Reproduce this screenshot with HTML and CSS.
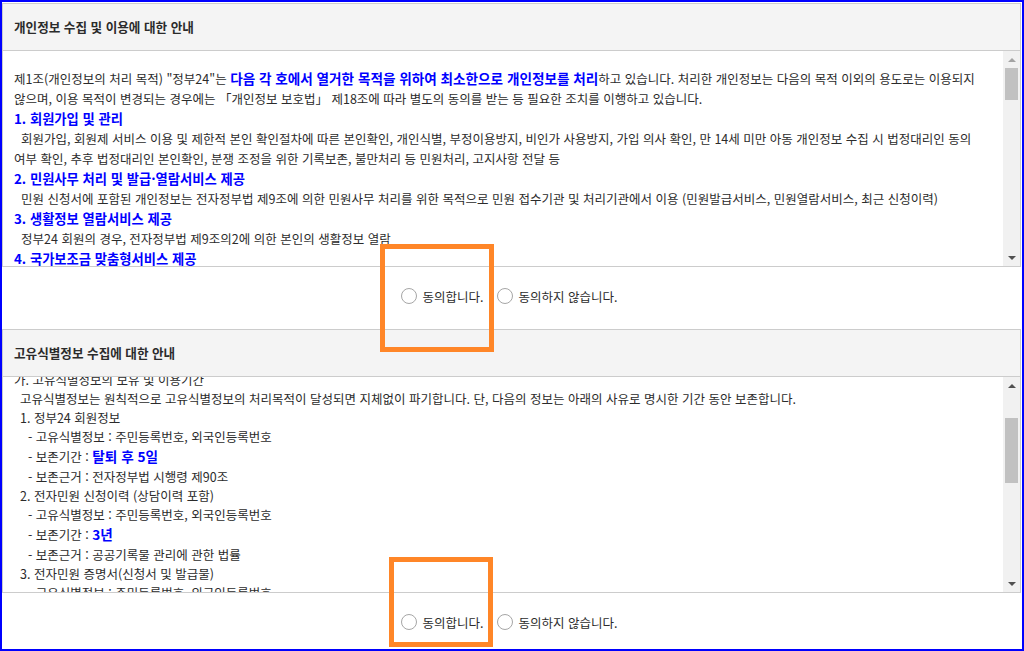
FILE: index.html
```html
<!DOCTYPE html>
<html lang="ko">
<head>
    <meta charset="UTF-8">
    <meta name="viewport" content="width=device-width, initial-scale=1.0">
    <title>약관 동의</title>
    <link rel="stylesheet" href="styles.css">
</head>
<body>
    <div class="frame">
        <section class="terms">
            <h2 class="terms-title">개인정보 수집 및 이용에 대한 안내</h2>
            <div class="terms-box">
                <div class="terms-text">
                    <p>제1조(개인정보의 처리 목적) "정부24"는 <strong>다음 각 호에서 열거한 목적을 위하여 최소한으로 개인정보를 처리</strong>하고 있습니다. 처리한 개인정보는 다음의 목적 이외의 용도로는 이용되지 않으며, 이용 목적이 변경되는 경우에는 「개인정보 보호법」 제18조에 따라 별도의 동의를 받는 등 필요한 조치를 이행하고 있습니다.</p>
                    <h3>1. 회원가입 및 관리</h3>
                    <p class="indent">회원가입, 회원제 서비스 이용 및 제한적 본인 확인절차에 따른 본인확인, 개인식별, 부정이용방지, 비인가 사용방지, 가입 의사 확인, 만 14세 미만 아동 개인정보 수집 시 법정대리인 동의 여부 확인, 추후 법정대리인 본인확인, 분쟁 조정을 위한 기록보존, 불만처리 등 민원처리, 고지사항 전달 등</p>
                    <h3>2. 민원사무 처리 및 발급·열람서비스 제공</h3>
                    <p class="indent">민원 신청서에 포함된 개인정보는 전자정부법 제9조에 의한 민원사무 처리를 위한 목적으로 민원 접수기관 및 처리기관에서 이용 (민원발급서비스, 민원열람서비스, 최근 신청이력)</p>
                    <h3>3. 생활정보 열람서비스 제공</h3>
                    <p class="indent">정부24 회원의 경우, 전자정부법 제9조의2에 의한 본인의 생활정보 열람</p>
                    <h3>4. 국가보조금 맞춤형서비스 제공</h3>
                    <p class="indent">보조금 수급 대상 여부 확인 및 맞춤형 서비스 안내</p>
                </div>
                <div class="scrollbar">
                    <span class="sb-btn"><i class="arrow-up is-off"></i></span>
                    <span class="sb-track"><span class="thumb thumb-top"></span></span>
                    <span class="sb-btn"><i class="arrow-down"></i></span>
                </div>
            </div>
            <div class="agree">
                <label><input type="radio" name="agree1"> 동의합니다.</label>
                <label><input type="radio" name="agree1"> 동의하지 않습니다.</label>
            </div>
        </section>

        <section class="terms">
            <h2 class="terms-title">고유식별정보 수집에 대한 안내</h2>
            <div class="terms-box">
                <div class="terms-text terms-text--scrolled">
                    <p>가. 고유식별정보의 보유 및 이용기간</p>
                    <p class="ind1">고유식별정보는 원칙적으로 고유식별정보의 처리목적이 달성되면 지체없이 파기합니다. 단, 다음의 정보는 아래의 사유로 명시한 기간 동안 보존합니다.</p>
                    <p class="ind1">1. 정부24 회원정보</p>
                    <p class="ind2">- 고유식별정보 : 주민등록번호, 외국인등록번호</p>
                    <p class="ind2 tall">- 보존기간 : <strong>탈퇴 후 5일</strong></p>
                    <p class="ind2">- 보존근거 : 전자정부법 시행령 제90조</p>
                    <p class="ind1">2. 전자민원 신청이력 (상담이력 포함)</p>
                    <p class="ind2">- 고유식별정보 : 주민등록번호, 외국인등록번호</p>
                    <p class="ind2 tall">- 보존기간 : <strong>3년</strong></p>
                    <p class="ind2">- 보존근거 : 공공기록물 관리에 관한 법률</p>
                    <p class="ind1">3. 전자민원 증명서(신청서 및 발급물)</p>
                    <p class="ind2">- 고유식별정보 : 주민등록번호, 외국인등록번호</p>
                    <p class="ind2 tall">- 보존기간 : <strong>5년</strong></p>
                </div>
                <div class="scrollbar">
                    <span class="sb-btn"><i class="arrow-up"></i></span>
                    <span class="sb-track"><span class="thumb thumb-mid"></span></span>
                    <span class="sb-btn"><i class="arrow-down"></i></span>
                </div>
            </div>
            <div class="agree">
                <label><input type="radio" name="agree2"> 동의합니다.</label>
                <label><input type="radio" name="agree2"> 동의하지 않습니다.</label>
            </div>
        </section>

        <!-- annotation boxes -->
        <div class="mark mark-1"></div>
        <div class="mark mark-2"></div>
    </div>
</body>
</html>
```

FILE: styles.css
```css
* {
    margin: 0;
    padding: 0;
    box-sizing: border-box;
}

body {
    background: #fff;
    font-family: "Noto Sans CJK KR", "Noto Sans", sans-serif;
    font-size: 12.5px;
    color: #2b2b2b;
}

.frame {
    position: relative;
    width: 1024px;
    height: 651px;
    border: 2px solid #0000ff;
    padding: 1px 1px 0 0;
    overflow: hidden;
}

.terms-title {
    height: 48px;
    background: #f4f4f4;
    border: 1px solid #ccc;
    padding-left: 11px;
    font-size: 12.6px;
    font-weight: bold;
    line-height: 46px;
    color: #2b2b2b;
}

.terms-box {
    display: flex;
    height: 216px;
    border: 1px solid #ccc;
    border-top: 0;
}

.terms-text {
    flex: 1;
    overflow: hidden;
    padding: 17px 14px 0 11px;
    line-height: 20px;
    word-break: keep-all;
}

.terms-text strong {
    font-size: 13.6px;
    color: #0000ff;
}

.terms-text h3 {
    font-size: 13.3px;
    font-weight: bold;
    color: #0000ff;
    line-height: 20px;
}

.indent {
    text-indent: 7px;
}

.terms-text--scrolled {
    padding-top: 0;
    line-height: 19px;
}

.terms-text--scrolled p:first-child {
    margin-top: -7px;
}

.ind1 {
    padding-left: 6px;
}

.ind2 {
    padding-left: 14px;
}

.tall {
    line-height: 21px;
}

/* fake classic scrollbar */
.scrollbar {
    width: 17px;
    display: flex;
    flex-direction: column;
    background: #f1f1f1;
}

.sb-btn {
    height: 17px;
    display: flex;
    align-items: center;
    justify-content: center;
}

.sb-track {
    flex: 1;
    padding: 0 2px;
}

.thumb {
    display: block;
    background: #c1c1c1;
}

.thumb-top {
    height: 32px;
}

.thumb-mid {
    margin-top: 24px;
    height: 65px;
}

.arrow-up,
.arrow-down {
    width: 0;
    height: 0;
    border-left: 4px solid transparent;
    border-right: 4px solid transparent;
}

.arrow-up {
    border-bottom: 4px solid #505050;
}

.arrow-up.is-off {
    border-bottom-color: #a3a3a3;
}

.arrow-down {
    border-top: 4px solid #505050;
}

.agree {
    height: 62px;
    display: flex;
    justify-content: center;
    gap: 13px;
    padding: 21px 5px 0 0;
}

.agree label {
    display: flex;
    align-items: center;
    gap: 6px;
    height: 16px;
    cursor: pointer;
}

.agree input {
    appearance: none;
    width: 16px;
    height: 16px;
    border: 1px solid #a6a6a6;
    border-radius: 50%;
    background: #fff;
}

.agree input:checked {
    background: radial-gradient(circle, #333 0 3px, #fff 4px);
}

.mark {
    position: absolute;
    border: 5px solid #ff8628;
}

.mark-1 {
    left: 378px;
    top: 242px;
    width: 114px;
    height: 108px;
}

.mark-2 {
    left: 387px;
    top: 555px;
    width: 104px;
    height: 90px;
}
```
